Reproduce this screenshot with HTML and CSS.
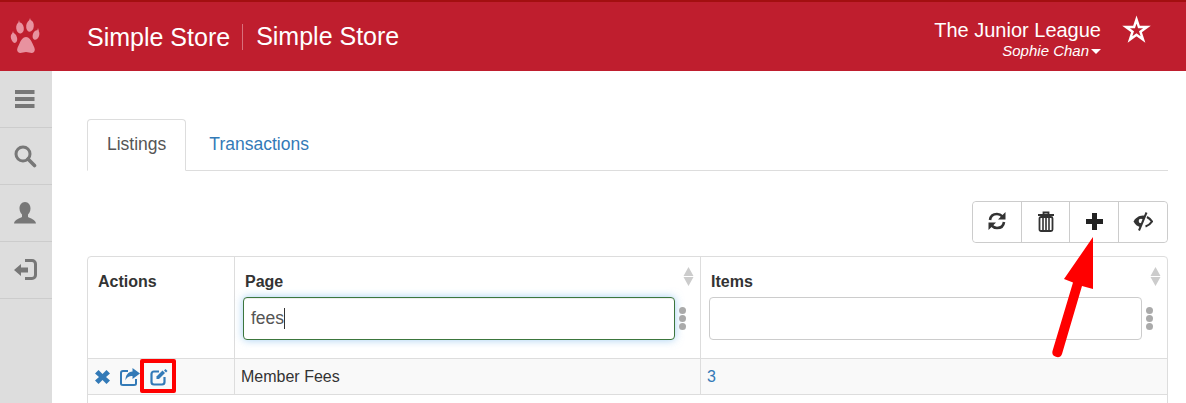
FILE: index.html
```html
<!DOCTYPE html>
<html lang="en">
<head>
<meta charset="utf-8">
<title>Simple Store</title>
<link rel="stylesheet" href="styles.css">
</head>
<body>
<header class="topbar">
  <div class="logo">
    <svg width="32" height="38" viewBox="0 0 32 38"><g fill="#e8929f"><ellipse cx="10" cy="11" rx="3.800" ry="5.500" transform="rotate(-8 10 11)"/><ellipse cx="20" cy="9" rx="3.800" ry="5.800" transform="rotate(6 20 9)"/><ellipse cx="4" cy="21" rx="3" ry="5" transform="rotate(-16 4 21)"/><ellipse cx="26" cy="18" rx="3.200" ry="5" transform="rotate(18 26 18)"/><path d="M16 20c3 0 5 3 6.500 6.500 1.500 3.500 3.500 6 1.500 8.500-2 2-5 0-8 0s-6 2-8 0c-2-2.500 0-5 1.500-8.500C11 23 13 20 16 20z"/><path d="M9 3l1 4H8zM20 1l1 3h-2zM3 14l1 3.500H2zM28 11l1 3.500h-2z"/></g></svg>
  </div>
  <div class="titles">
    <span class="title title-first">Simple Store</span>
    <span class="title">Simple Store</span>
  </div>
  <div class="org">
    <div class="org-name">The Junior League</div>
    <div class="org-user">Sophie Chan<span class="caret"></span></div>
  </div>
  <svg class="star" width="27" height="28" viewBox="0 0 27 28"><path d="M13.500 3.500L15.970 11.100H23.960L17.500 15.800 19.970 23.400 13.500 18.700 7.030 23.400 9.500 15.800 3.040 11.100H11.030z" fill="none" stroke="#fff" stroke-width="2.500" stroke-linejoin="miter"/></svg>
</header>
<div class="layout">
  <nav class="sidebar">
    <div class="side-item"><svg width="20" height="18" viewBox="0 0 20 18"><path d="M0 0h19.500v4H0zM0 7h19.500v4H0zM0 14h19.500v4H0z" fill="#777"/></svg></div>
    <div class="side-item"><svg width="24" height="24" viewBox="0 0 24 24"><circle cx="10" cy="10" r="7" fill="none" stroke="#777" stroke-width="3"/><path d="M15 15l6.500 6.500" stroke="#777" stroke-width="3.600" stroke-linecap="round"/></svg></div>
    <div class="side-item"><svg width="24" height="24" viewBox="0 0 24 24"><path d="M12 1c3.500 0 5.500 3 5.500 6.500 0 3-1.500 5-2.500 6v2.500c2 1 7.500 2.500 8 6.500H1c.5-4 6-5.500 8-6.500v-2.500c-1-1-2.500-3-2.500-6C6.500 4 8.500 1 12 1z" fill="#777"/></svg></div>
    <div class="side-item"><svg width="24" height="22" viewBox="0 0 24 22"><path d="M12 1.500h7c2 0 3.500 1.500 3.500 3.500v11c0 2-1.500 3.500-3.500 3.500h-7" fill="none" stroke="#777" stroke-width="3"/><path d="M1 11l7-6v3.500h7v5H8V17z" fill="#777"/></svg></div>
  </nav>
  <main class="content">
    <div class="tabs">
      <a class="tab tab-active">Listings</a>
      <a class="tab">Transactions</a>
    </div>
    <div class="toolbar">
      <div class="btn-group">
        <button class="btn btn-a"><svg width="20" height="20" viewBox="0 0 20 20"><g fill="none" stroke="#333" stroke-width="2.600"><path d="M3 9c.5-4 3-6 7-6 2.500 0 4 1 5.500 2.500"/><path d="M17 11c-.5 4-3 6-7 6-2.500 0-4-1-5.500-2.500"/></g><path d="M18.500 1v7.500H11zM1.500 19v-7.500H9z" fill="#333"/></svg></button>
        <button class="btn btn-b"><svg width="18" height="21" viewBox="0 0 18 21"><path d="M1 4h16M6.500 4V1.500h5V4" fill="none" stroke="#333" stroke-width="1.800"/><rect x="2.500" y="6" width="13" height="14" rx="1.500" fill="none" stroke="#333" stroke-width="1.800"/><path d="M6 7v12M9 7v12M12 7v12" stroke="#333" stroke-width="1.600"/></svg></button>
        <button class="btn btn-c"><svg width="17" height="17" viewBox="0 0 17 17"><path d="M6 0h5v6h6v5h-6v6H6v-6H0V6h6z" fill="#222"/></svg></button>
        <button class="btn btn-d"><svg width="20" height="19" viewBox="0 0 20 19"><path d="M10 3.500C5.500 3.500 2 6.500 .500 9.500 2 12.500 4.500 14.500 7 15L12 3.800z" fill="#333"/><circle cx="8" cy="9" r="2.300" fill="#fff"/><path d="M14 5c2 1 4 3 5 4.500-1 1.500-3.500 4-6.500 5" fill="none" stroke="#333" stroke-width="2.200"/><path d="M13.500.5L6 18.500" stroke="#333" stroke-width="2"/></svg></button>
      </div>
    </div>
    <div class="grid">
      <div class="cell head col-a"><span class="head-label">Actions</span></div>
      <div class="cell head col-b">
        <span class="head-label">Page</span>
        <svg class="sort" width="11" height="19" viewBox="0 0 11 19"><path d="M5.500 0l5 9H.500zM5.500 19l-5-9h10z" fill="#ccc"/></svg>
        <div class="filter-row">
          <div class="filter filter-focus"><span class="filter-text">fees</span><span class="cursor"></span></div>
          <span class="dots"><i></i><i></i><i></i></span>
        </div>
      </div>
      <div class="cell head col-c">
        <span class="head-label">Items</span>
        <svg class="sort" width="11" height="19" viewBox="0 0 11 19"><path d="M5.500 0l5 9H.500zM5.500 19l-5-9h10z" fill="#ccc"/></svg>
        <div class="filter-row">
          <div class="filter"></div>
          <span class="dots"><i></i><i></i><i></i></span>
        </div>
      </div>
      <div class="cell row col-a actions">
        <svg width="15" height="14" viewBox="0 0 15 14"><path d="M3.500 0l4 4 4-4L15 3.500l-4 3.500 4 3.500-3.500 3.500-4-4-4 4L0 10.500 4 7 0 3.500z" fill="#337ab7"/></svg>
        <svg width="20" height="18" viewBox="0 0 20 18"><path d="M8 3H3C2 3 1 4 1 5v10.500c0 1 1 1.500 2 1.500h11c1 0 2-.5 2-1.500V11" fill="none" stroke="#337ab7" stroke-width="2"/><path d="M12.500 0L20 5.500 12.500 11V8C9 8 7 9 5.500 12.500 5.500 7 8 4 12.500 3.500z" fill="#337ab7"/></svg>
        <svg width="18" height="18" viewBox="0 0 18 18"><path d="M9 3.500H4C2.500 3.500 1.500 4.500 1.500 6v8c0 1.500 1 2.500 2.500 2.500h8c1.500 0 2.500-1 2.500-2.500V9" fill="none" stroke="#337ab7" stroke-width="2.200"/><path d="M6.500 8.500L12.500 2.500 15 5 9 11H6.500z" fill="#337ab7"/><path d="M15.500 1L17.500 3 16 4.500 14 2.500z" fill="#337ab7"/></svg>
      </div>
      <div class="cell row col-b">Member Fees</div>
      <div class="cell row col-c"><a class="link">3</a></div>
    </div>
  </main>
</div>
<div class="highlight"></div>
<svg class="arrow" width="60" height="130" viewBox="0 0 60 130"><path d="M45 7L16 49 25 52.500 4.500 121A5 5 0 0 0 14 124L34 56 45 59z" fill="#f00"/></svg>
</body>
</html>
```
FILE: styles.css
```css
* { box-sizing: border-box; }
html, body { margin: 0; padding: 0; }
body {
  width: 1186px;
  height: 403px;
  overflow: hidden;
  position: relative;
  font-family: "Liberation Sans", Arial, sans-serif;
  font-size: 16px;
  color: #333;
  background: #fff;
}
.topbar {
  height: 71px;
  display: flex;
  align-items: center;
  background: #bf1e2e;
  border-top: 2px solid #a30f10;
  color: #fff;
}
.logo { width: 87px; padding-left: 10px; display: flex; margin-top: -1px; }
.titles { display: flex; align-items: center; flex: 1; font-size: 25px; }
.title-first { padding-right: 12px; margin-right: 13px; border-right: 1px solid #d9707c; line-height: 26px; }
.org { text-align: right; margin-top: 5px; }
.org-name { font-size: 20px; line-height: 24px; }
.org-user { font-size: 15px; font-style: italic; line-height: 18px; }
.caret {
  display: inline-block;
  margin-left: 2px;
  vertical-align: 2px;
  border-left: 5px solid transparent;
  border-right: 5px solid transparent;
  border-top: 5px solid #fff;
}
.star { margin: -13px 36px 0 22px; overflow: visible; }
.layout { display: flex; height: 332px; }
.sidebar { width: 52px; background: #ddd; flex: none; }
.side-item {
  height: 57px;
  border-bottom: 1px solid #ccc;
  padding-right: 2px;
  display: flex;
  align-items: center;
  justify-content: center;
}
.content { flex: 1; min-width: 0; padding: 48px 18px 0 35px; }
.tabs { display: flex; height: 52px; border-bottom: 1px solid #ddd; }
.tab {
  height: 52px;
  padding: 0 19px;
  line-height: 48px;
  font-size: 17.500px;
  color: #337ab7;
  border: 1px solid transparent;
  border-radius: 4px 4px 0 0;
  margin-right: 3px;
}
.tab-active { color: #555; border-color: #ddd; border-bottom-color: #fff; background: #fff; }
.toolbar { display: flex; justify-content: flex-end; margin-top: 30px; }
.btn-group { display: flex; height: 42px; border: 1px solid #ccc; border-radius: 4px; }
.btn {
  height: 40px;
  padding: 0 0 2px;
  background: #fff;
  border: 0;
  border-right: 1px solid #ccc;
  display: flex;
  align-items: center;
  justify-content: center;
}
.btn-a { width: 49px; border-radius: 4px 0 0 4px; }
.btn-b { width: 48px; }
.btn-c { width: 49px; }
.btn-d { width: 48px; border-right: 0; border-radius: 0 4px 4px 0; }
.grid {
  margin-top: 13px;
  display: grid;
  grid-template-columns: 147px 466px 466px;
  grid-template-rows: 102px 36px 10px;
  border: 1px solid #ddd;
  border-radius: 4px 4px 0 0;
}
.cell { position: relative; border-right: 1px solid #ddd; border-bottom: 1px solid #ddd; }
.col-c { border-right: 0; }
.head { padding: 15px 10px 0; font-size: 16px; }
.head-label { font-weight: 700; line-height: 20px; display: block; color: #333; }
.sort { position: absolute; right: 6px; top: 10px; }
.filter-row { display: flex; align-items: center; margin: 5px 0 0 -2px; gap: 3px; }
.filter {
  width: 433px;
  height: 43px;
  border: 1px solid #ccc;
  border-radius: 4px;
  background: #fff;
  padding: 10px 7px 0;
  font-size: 17.500px;
  line-height: 21px;
  color: #555;
  display: flex;
  flex: none;
}
.filter-focus {
  width: 432px;
  border-color: #3c763d;
  box-shadow: inset 0 1px 1px rgba(0,0,0,.075), 0 0 8px rgba(102,175,233,.6);
}
.cursor { width: 1px; height: 21px; background: #333; }
.dots { display: flex; flex-direction: column; gap: 1px; width: 8px; margin-left: 1px; }
.dots i { display: block; width: 7px; height: 7px; border-radius: 50%; background: #aaa; }
.row {
  background: #f9f9f9;
  height: 36px;
  padding: 0 6px;
  display: flex;
  align-items: center;
  font-size: 16px;
}
.actions { padding-left: 7px; gap: 10px; }
.link { color: #337ab7; }
.highlight {
  position: absolute;
  left: 140px;
  top: 359px;
  width: 36px;
  height: 34px;
  border: 4px solid #f00;
  border-radius: 2px;
}
.arrow { position: absolute; left: 1048px; top: 230px; }
```
